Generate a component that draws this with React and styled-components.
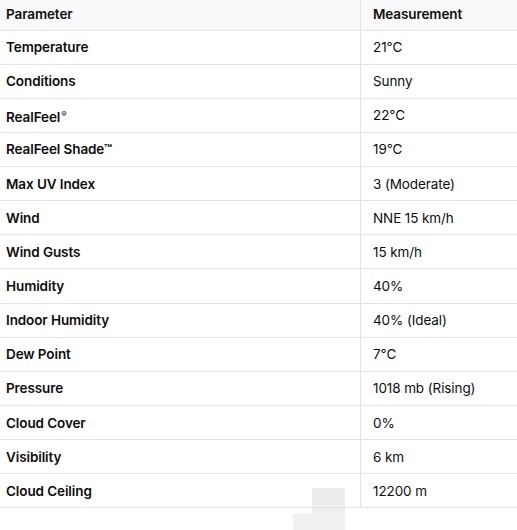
import styled, { createGlobalStyle } from 'styled-components';

const GlobalStyle = createGlobalStyle`
  body {
    margin: 0;
    background: #fff;
    font-family: Inter, "Noto Sans", "Liberation Sans", sans-serif;
    color: #0d0d0d;
  }
`;

const Page = styled.div`
  position: relative;
  width: 517px;
  height: 530px;
  overflow: hidden;
`;

const Table = styled.table`
  width: 517px;
  border-collapse: collapse;
  font-size: 13.5px;
  line-height: 20px;
`;

const HeadRow = styled.tr`
  background: #f9f9f9;
  height: 30px;
`;

const Row = styled.tr`
  height: 34.15px;
  border-top: 1px solid #e3e3e3;
  &:last-child {
    border-bottom: 1px solid #e3e3e3;
  }
`;

const Th = styled.th`
  text-align: left;
  font-weight: 600;
  padding: 0 0 2px ${p => (p.$first ? '6px' : '12px')};
  width: ${p => (p.$first ? '354px' : 'auto')};
  border-left: ${p => (p.$first ? 'none' : '1px solid #e3e3e3')};
  letter-spacing: -0.1px;
`;

const Td = styled.td`
  padding: 0 0 0 ${p => (p.$first ? '6px' : '12px')};
  font-weight: ${p => (p.$first ? 600 : 400)};
  border-left: ${p => (p.$first ? 'none' : '1px solid #e3e3e3')};
  letter-spacing: -0.1px;
`;

const Sup = styled.sup`
  font-size: 8px;
  vertical-align: 5px;
  margin-left: 1px;
`;

// faint square left over the last row (screenshot artifact)
const Ghost = styled.div`
  position: absolute;
  left: ${p => p.$x}px;
  top: ${p => p.$y}px;
  width: ${p => p.$w}px;
  height: ${p => p.$h}px;
  background: ${p => p.$c};
`;

const rows = [
  ['Temperature', '21°C'],
  ['Conditions', 'Sunny'],
  [<>RealFeel<Sup>®</Sup></>, '22°C'],
  ['RealFeel Shade™', '19°C'],
  ['Max UV Index', '3 (Moderate)'],
  ['Wind', 'NNE 15 km/h'],
  ['Wind Gusts', '15 km/h'],
  ['Humidity', '40%'],
  ['Indoor Humidity', '40% (Ideal)'],
  ['Dew Point', '7°C'],
  ['Pressure', '1018 mb (Rising)'],
  ['Cloud Cover', '0%'],
  ['Visibility', '6 km'],
  ['Cloud Ceiling', '12200 m'],
];

export default function App() {
  return (
    <Page>
      <GlobalStyle />
      <Table>
        <thead>
          <HeadRow>
            <Th $first>Parameter</Th>
            <Th>Measurement</Th>
          </HeadRow>
        </thead>
        <tbody>
          {rows.map(([k, v], i) => (
            <Row key={i}>
              <Td $first>{k}</Td>
              <Td>{v}</Td>
            </Row>
          ))}
        </tbody>
      </Table>
      <Ghost $x={312} $y={488} $w={33} $h={25} $c="rgba(225,225,225,0.6)" />
      <Ghost $x={293} $y={513} $w={52} $h={17} $c="rgba(232,232,232,0.6)" />
    </Page>
  );
}
